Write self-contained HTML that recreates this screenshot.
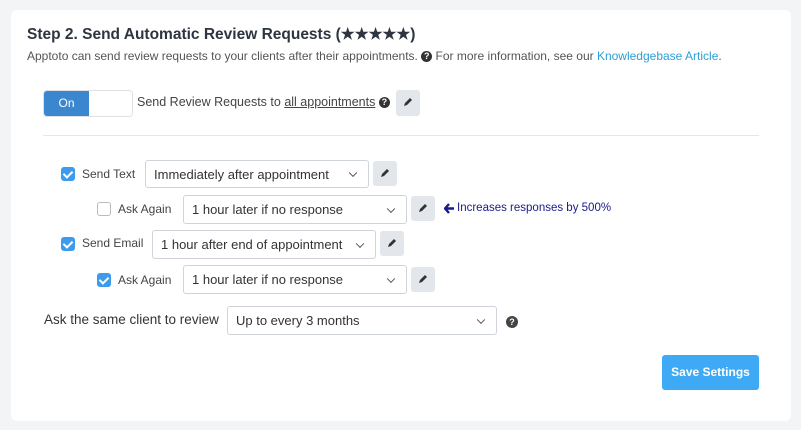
<!DOCTYPE html>
<html><head><style>
*{box-sizing:border-box;margin:0;padding:0}
body{width:801px;height:430px;background:#f3f4f6;font-family:"Liberation Sans",sans-serif;position:relative;overflow:hidden;color:#333}
.card{position:absolute;left:11px;top:10px;width:780px;height:411px;background:#fff;border-radius:6px}
.a{position:absolute;white-space:nowrap}
.sel{position:absolute;border:1px solid #cfd4da;border-radius:3px;background:#fff;font-size:13px;color:#333;padding-left:8px;display:flex;align-items:center}
.sel:after{content:"";position:absolute;right:12px;top:50%;width:5px;height:5px;border-right:1px solid #555;border-bottom:1px solid #555;transform:translateY(-70%) rotate(45deg)}
.pen{position:absolute;width:24px;height:25px;background:#e3e6ea;border-radius:3px}
.pen svg{position:absolute;left:7px;top:7px}
.cb{position:absolute;width:14px;height:14px;border-radius:3px;background:#3b9bef}
.cb:after{content:"";position:absolute;left:4px;top:1.5px;width:4px;height:7px;border-right:2px solid #fff;border-bottom:2px solid #fff;transform:rotate(45deg)}
.cb.off{background:#fff;border:1px solid #bbb}
.cb.off:after{display:none}
.lbl{position:absolute;font-size:12px;color:#444}
.q{display:inline-block;width:11px;height:11px;border-radius:50%;background:#333;color:#fff;font-size:9px;font-weight:bold;text-align:center;line-height:11px;vertical-align:1px}
</style></head><body>
<div class="card"></div>
<div class="a" style="left:27px;top:25px;font-size:15.5px;font-weight:bold;color:#2d3540">Step 2. Send Automatic Review Requests (★★★★★)</div>
<div class="a" style="left:27px;top:49px;font-size:12px;color:#555">Apptoto can send review requests to your clients after their appointments. <span class="q">?</span> For more information, see our <span style="color:#2a9fd8">Knowledgebase Article</span>.</div>

<div class="a" style="left:43px;top:90px;width:90px;height:27px;border:1px solid #dde1e5;border-radius:4px;overflow:hidden;background:#fff">
<div style="width:45px;height:100%;background:#3a86cf;color:#fff;font-size:12px;text-align:center;line-height:25px">On</div></div>
<div class="a" style="left:137px;top:95px;font-size:12.5px;color:#444">Send Review Requests to <span style="text-decoration:underline">all appointments</span> <span class="q">?</span></div>
<div class="pen" style="left:396px;top:90px;height:26px"><svg width="10" height="10" viewBox="0 0 10 10"><path d="M1 9l1-3 5-5 2 2-5 5z" fill="#333"/></svg></div>
<div class="a" style="left:43px;top:135px;width:716px;height:1px;background:#e5e7ea"></div>

<div class="cb" style="left:61px;top:167px"></div>
<div class="lbl" style="left:82px;top:167px">Send Text</div>
<div class="sel" style="left:145px;top:160px;width:224px;height:28px">Immediately after appointment</div>
<div class="pen" style="left:373px;top:161px"><svg width="10" height="10" viewBox="0 0 10 10"><path d="M1 9l1-3 5-5 2 2-5 5z" fill="#333"/></svg></div>

<div class="cb off" style="left:97px;top:202px"></div>
<div class="lbl" style="left:118px;top:202px">Ask Again</div>
<div class="sel" style="left:183px;top:195px;width:224px;height:29px">1 hour later if no response</div>
<div class="pen" style="left:411px;top:196px"><svg width="10" height="10" viewBox="0 0 10 10"><path d="M1 9l1-3 5-5 2 2-5 5z" fill="#333"/></svg></div>
<svg class="a" style="left:444px;top:203px" width="11" height="11" viewBox="0 0 11 11"><path d="M5 1L1 5.5 5 10M1.5 5.5H10" stroke="#1a1a8c" stroke-width="2.4" fill="none"/></svg>
<div class="a" style="left:457px;top:202px;font-size:11.5px;color:#1a1a8c">Increases responses by 500%</div>

<div class="cb" style="left:61px;top:237px"></div>
<div class="lbl" style="left:82px;top:236px">Send Email</div>
<div class="sel" style="left:152px;top:230px;width:224px;height:29px">1 hour after end of appointment</div>
<div class="pen" style="left:380px;top:231px"><svg width="10" height="10" viewBox="0 0 10 10"><path d="M1 9l1-3 5-5 2 2-5 5z" fill="#333"/></svg></div>

<div class="cb" style="left:97px;top:273px"></div>
<div class="lbl" style="left:118px;top:273px">Ask Again</div>
<div class="sel" style="left:183px;top:265px;width:224px;height:29px">1 hour later if no response</div>
<div class="pen" style="left:411px;top:267px"><svg width="10" height="10" viewBox="0 0 10 10"><path d="M1 9l1-3 5-5 2 2-5 5z" fill="#333"/></svg></div>

<div class="a" style="left:44px;top:312px;font-size:13.5px;color:#333">Ask the same client to review</div>
<div class="sel" style="left:227px;top:306px;width:270px;height:29px">Up to every 3 months</div>
<div class="a" style="left:506px;top:313px"><span class="q" style="width:12px;height:12px;line-height:12px;background:#444">?</span></div>

<div class="a" style="left:662px;top:355px;width:97px;height:35px;background:#3eaaf5;border-radius:3px;color:#fff;font-size:12px;font-weight:bold;text-align:center;line-height:35px">Save Settings</div>
</body></html>
